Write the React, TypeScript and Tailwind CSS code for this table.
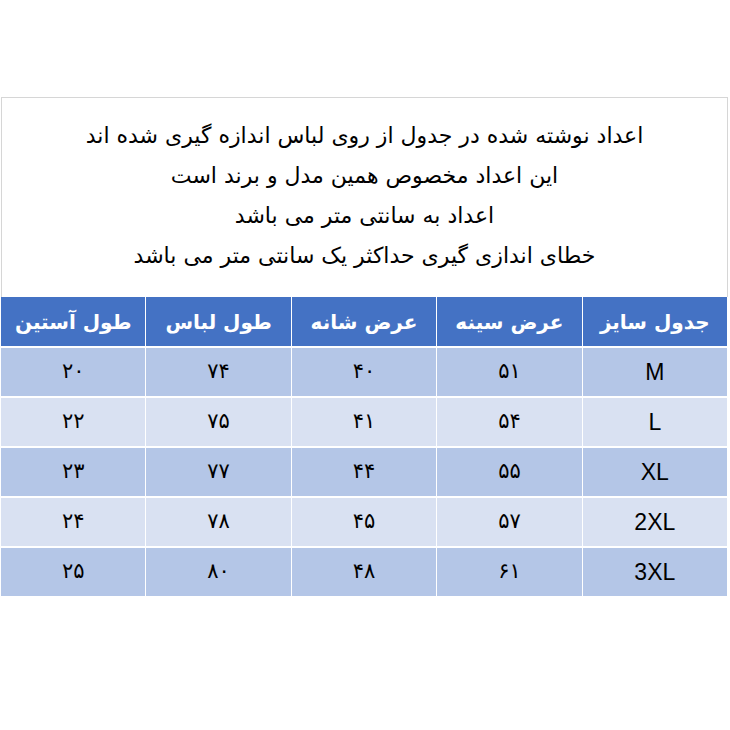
const notes = [
  'اعداد نوشته شده در جدول از روی لباس اندازه گیری شده اند',
  'این اعداد مخصوص همین مدل و برند است',
  'اعداد به سانتی متر می باشد',
  'خطای اندازی گیری حداکثر یک سانتی متر می باشد',
];

const headers = ['جدول سایز', 'عرض سینه', 'عرض شانه', 'طول لباس', 'طول آستین'];

const rows = [
  ['M', '۵۱', '۴۰', '۷۴', '۲۰'],
  ['L', '۵۴', '۴۱', '۷۵', '۲۲'],
  ['XL', '۵۵', '۴۴', '۷۷', '۲۳'],
  ['2XL', '۵۷', '۴۵', '۷۸', '۲۴'],
  ['3XL', '۶۱', '۴۸', '۸۰', '۲۵'],
];

export default function App() {
  return (
    <div
      className="w-[730px] h-[730px] bg-white pt-[97px] text-black"
      style={{ fontFamily: '"DejaVu Sans", sans-serif' }}
    >
      {/* Merged note cell */}
      <div
        dir="rtl"
        className="ml-px w-[727px] h-[200px] border-t border-l border-r border-[#d6d6d6] flex flex-col items-center justify-center pb-[4px]"
      >
        {notes.map((line) => (
          <p key={line} className="text-[22px] leading-[40px]">
            {line}
          </p>
        ))}
      </div>

      {/* Size table */}
      <div dir="rtl" className="ml-px w-[726px] grid grid-cols-5 gap-x-px gap-y-[2px] bg-white">
        {headers.map((h) => (
          <div
            key={h}
            className="h-[49px] bg-[#4472c4] text-white font-bold text-[20px] flex items-center justify-center"
          >
            {h}
          </div>
        ))}
        {rows.map((row, i) =>
          row.map((cell, j) => (
            <div
              key={`${i}-${j}`}
              className={`h-[48px] flex items-center justify-center ${
                j === 0 ? 'text-[23px]' : 'text-[21px]'
              } ${i % 2 === 0 ? 'bg-[#b4c6e7]' : 'bg-[#d9e1f2]'}`}
              style={j === 0 ? { fontFamily: '"Liberation Sans", sans-serif' } : undefined}
            >
              {cell}
            </div>
          ))
        )}
      </div>
      <div className="ml-[2px] -mt-[4px] w-[3px] h-[2px] bg-[#4472c4]" />
    </div>
  );
}
